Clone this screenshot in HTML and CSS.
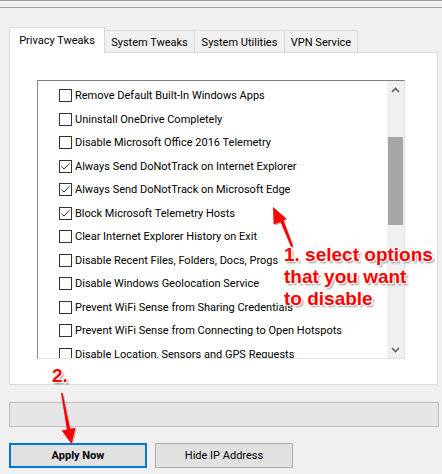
FILE: index.html
```html
<!DOCTYPE html>
<html>
<head>
<meta charset="utf-8">
<link rel="stylesheet" href="styles.css">
</head>
<body>
<div class="topbar"></div>
<div class="tabs">
  <div class="tab active">Privacy Tweaks</div>
  <div class="tab w91">System Tweaks</div>
  <div class="tab w91">System Utilities</div>
  <div class="tab w74">VPN Service</div>
</div>
<div class="panel">
  <div class="listbox">
    <ul class="list">
      <li class="item"><span class="cb"></span><span class="lbl">Remove Default Built-In Windows Apps</span></li>
      <li class="item"><span class="cb"></span><span class="lbl">Uninstall OneDrive Completely</span></li>
      <li class="item"><span class="cb"></span><span class="lbl">Disable Microsoft Office 2016 Telemetry</span></li>
      <li class="item"><span class="cb checked"><svg viewBox="0 0 13 13" width="13" height="13"><path d="M2.5 6.5 L5 9 L10.5 3.2" fill="none" stroke="#333" stroke-width="1"/></svg></span><span class="lbl">Always Send DoNotTrack on Internet Explorer</span></li>
      <li class="item"><span class="cb checked"><svg viewBox="0 0 13 13" width="13" height="13"><path d="M2.5 6.5 L5 9 L10.5 3.2" fill="none" stroke="#333" stroke-width="1"/></svg></span><span class="lbl">Always Send DoNotTrack on Microsoft Edge</span></li>
      <li class="item"><span class="cb checked"><svg viewBox="0 0 13 13" width="13" height="13"><path d="M2.5 6.5 L5 9 L10.5 3.2" fill="none" stroke="#333" stroke-width="1"/></svg></span><span class="lbl">Block Microsoft Telemetry Hosts</span></li>
      <li class="item"><span class="cb"></span><span class="lbl">Clear Internet Explorer History on Exit</span></li>
      <li class="item"><span class="cb"></span><span class="lbl">Disable Recent Files, Folders, Docs, Progs</span></li>
      <li class="item"><span class="cb"></span><span class="lbl">Disable Windows Geolocation Service</span></li>
      <li class="item"><span class="cb"></span><span class="lbl">Prevent WiFi Sense from Sharing Credentials</span></li>
      <li class="item"><span class="cb"></span><span class="lbl">Prevent WiFi Sense from Connecting to Open Hotspots</span></li>
      <li class="item"><span class="cb"></span><span class="lbl">Disable Location, Sensors and GPS Requests</span></li>
    </ul>
    <div class="scrollbar">
      <div class="sb-btn"><svg width="9" height="6" viewBox="0 0 9 6"><path d="M1 5 L4.5 1.5 L8 5" fill="none" stroke="#606060" stroke-width="1.6"/></svg></div>
      <div class="sb-track"><div class="sb-thumb"></div></div>
      <div class="sb-btn"><svg width="9" height="6" viewBox="0 0 9 6"><path d="M1 1 L4.5 4.5 L8 1" fill="none" stroke="#606060" stroke-width="1.6"/></svg></div>
    </div>
  </div>
</div>
<div class="progress"></div>
<div class="buttons">
  <button class="btn primary">Apply Now</button>
  <button class="btn">Hide IP Address</button>
</div>
<div class="note note1">1. select options<br>that you want<br>to disable</div>
<div class="note note2">2.</div>
<svg class="arrows" width="442" height="474" viewBox="0 0 442 474">
  <g fill="#7a7a7a" opacity="0.5" transform="translate(1.2,1.2)">
    <polygon points="291,247 293,246 283.5,220.5 286.2,218.4 273,207 273.6,224.4 280.5,222"/>
    <polygon points="61,393 62.5,393 70,428.6 75.5,427.9 71.5,444 61.7,430.6 66.8,429.4"/>
  </g>
  <g fill="#ff0000">
    <polygon points="291,247 293,246 283.5,220.5 286.2,218.4 273,207 273.6,224.4 280.5,222"/>
    <polygon points="61,393 62.5,393 70,428.6 75.5,427.9 71.5,444 61.7,430.6 66.8,429.4"/>
  </g>
</svg>
</body>
</html>
```
FILE: styles.css
```css
* { box-sizing: border-box; }
html, body { margin: 0; padding: 0; }
body {
  width: 442px;
  height: 474px;
  overflow: hidden;
  background: #f0f0f0;
  font-family: Roboto, "Liberation Sans", sans-serif;
  font-size: 11px;
  color: #000;
  position: relative;
}
.topbar {
  height: 8px;
  border-top: 1px solid #9a9a9a;
  border-bottom: 1px solid #a0a0a0;
  background: #f0f0f0;
}
.tabs {
  display: flex;
  align-items: flex-end;
  margin: 19px 0 0 9px;
  height: 25px;
}
.tab {
  height: 22px;
  border: 1px solid #d9d9d9;
  border-bottom: none;
  background: #f0f0f0;
  display: flex;
  align-items: center;
  justify-content: center;
  padding-top: 1px;
  margin-left: -1px;
  white-space: nowrap;
}
.tab.active {
  width: 96px;
  height: 26px;
  margin-left: 0;
  margin-bottom: -1px;
  padding-top: 0;
  background: #fff;
  position: relative;
  z-index: 1;
}
.w91 { width: 91px; }
.w74 { width: 74px; }
.panel {
  margin-left: 9px;
  width: 429px;
  height: 333px;
  border: 1px solid #d9d9d9;
  background: #fff;
  padding: 27px 0 0 27px;
}
.listbox {
  width: 368px;
  height: 279px;
  border: 1px solid;
  border-color: #7f7f7f #e3e3e3 #e3e3e3 #8a8a8a;
  display: flex;
  background: #fff;
}
.list {
  list-style: none;
  margin: 0;
  padding: 2.8px 0 0 21px;
  flex: 1;
  overflow: hidden;
}
.item {
  height: 23.5px;
  display: flex;
  align-items: center;
  white-space: nowrap;
}
.cb {
  width: 13px;
  height: 13px;
  border: 1px solid #333;
  background: #fff;
  flex: none;
  margin-right: 3px;
  position: relative;
}
.cb svg {
  display: block;
  margin: -1px;
}
.scrollbar {
  width: 17px;
  display: flex;
  flex-direction: column;
  background: #f0f0f0;
}
.sb-btn {
  height: 17px;
  display: flex;
  align-items: center;
  justify-content: center;
}
.sb-track {
  flex: 1;
  padding: 39px 1px 0 1px;
}
.sb-thumb {
  height: 88px;
  background: #a6a6a6;
}
.progress {
  margin: 17px 0 0 9px;
  width: 430px;
  height: 25px;
  border: 1px solid #bcbcbc;
  background: #e6e6e6;
}
.buttons {
  display: flex;
  gap: 8px;
  margin: 16px 0 0 9px;
}
.btn {
  width: 138px;
  height: 25px;
  border: 1px solid #adadad;
  background: #e1e1e1;
  font-family: Roboto, "Liberation Sans", sans-serif;
  font-size: 11px;
  color: #000;
  padding: 0;
  margin: 0;
}
.btn.primary {
  border: 2px solid #0078d7;
  font-weight: bold;
}
.note {
  position: absolute;
  font-family: "Liberation Sans", Arial, sans-serif;
  font-weight: bold;
  font-size: 19px;
  line-height: 22px;
  color: #ff0000;
  white-space: nowrap;
  text-shadow:
    -1px -1px 0 #fff, 1px -1px 0 #fff, -1px 1px 0 #fff, 1px 1px 0 #fff,
    0 -1px 0 #fff, 0 1px 0 #fff, -1px 0 0 #fff, 1px 0 0 #fff,
    2px 2px 2px rgba(0,0,0,0.45);
}
.note1 { left: 284px; top: 244px; }
.note2 { left: 52px; top: 365px; }
.arrows {
  position: absolute;
  left: 0;
  top: 0;
  pointer-events: none;
}
```
